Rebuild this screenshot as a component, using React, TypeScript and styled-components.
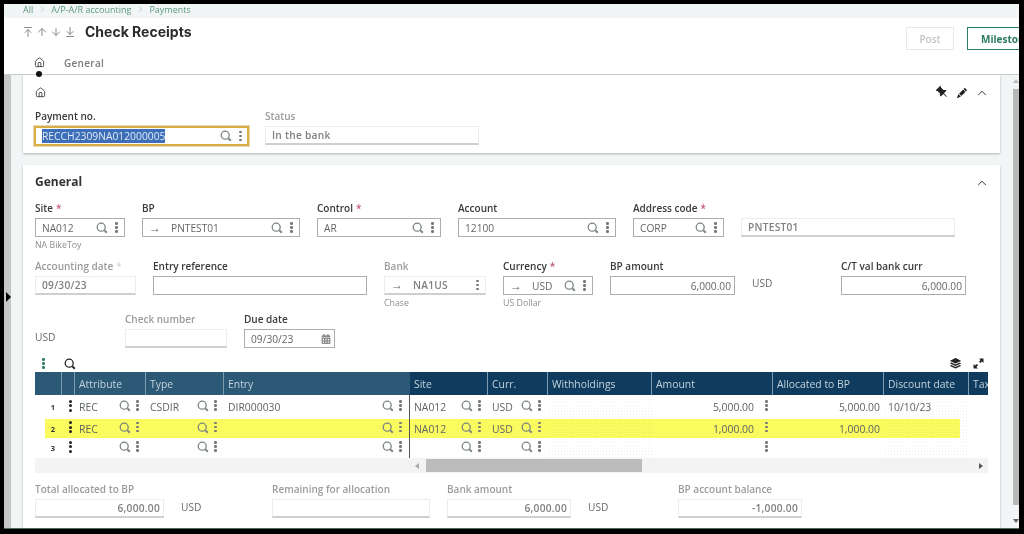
import React from "react";
import styled, { createGlobalStyle } from "styled-components";
import {
  ArrowDown,
  ArrowDownToLine,
  ArrowUp,
  ArrowUpToLine,
  ChevronRight,
  ChevronUp,
  House,
} from "lucide-react";
import { BsPencilFill, BsPinFill, BsStack } from "react-icons/bs";
import { FaCalendarAlt } from "react-icons/fa";

const GlobalStyle = createGlobalStyle`
  html, body {
    margin: 0;
    padding: 0;
    background: #000;
  }
  * {
    box-sizing: border-box;
  }
`;

const Frame = styled.div`
  width: 1024px;
  height: 534px;
  padding: 4px 5px 5px 4px;
  background: #000;
  overflow: hidden;
  font-family: "Open Sans", "Liberation Sans", sans-serif;
`;

const Screen = styled.div`
  display: flex;
  flex-direction: column;
  position: relative;
  height: 100%;
  background: #f2f5f5;
  border-bottom: 1px solid #4f6e5e;
  filter: blur(0.35px);
`;

const Breadcrumb = styled.div`
  display: flex;
  align-items: center;
  flex: none;
  gap: 3px;
  height: 14px;
  padding: 0 0 4px 19px;
  font-size: 9px;
  color: #5c9a85;
  svg {
    width: 9px;
    height: 9px;
    margin: 0 1.5px;
    color: #bbb;
  }
`;

const Header = styled.div`
  flex: none;
  position: relative;
  height: 57px;
  background: #fff;
  border-bottom: 1px solid #c9cccc;
`;

const TitleRow = styled.div`
  display: flex;
  align-items: center;
  height: 27px;
  padding: 0 0 0 18px;
`;

const NavArrows = styled.div`
  display: flex;
  gap: 2px;
  width: 63px;
  color: #8a8a8a;
  svg {
    width: 12px;
    height: 12px;
  }
`;

const Title = styled.h1`
  margin: 0;
  font-family: Inter, "Liberation Sans", sans-serif;
  font-size: 14px;
  font-weight: 700;
  color: #2b2b2b;
  flex: 1;
`;

const ActionButton = styled.div<{ $primary?: boolean }>`
  display: flex;
  align-items: center;
  justify-content: ${(p) => (p.$primary ? "flex-start" : "center")};
  flex: none;
  height: 23px;
  width: ${(p) => (p.$primary ? "52px" : "48px")};
  margin-left: ${(p) => (p.$primary ? "13px" : "0")};
  margin-top: 14px;
  padding-left: ${(p) => (p.$primary ? "13px" : "0")};
  overflow: hidden;
  white-space: nowrap;
  font-size: 10px;
  font-weight: ${(p) => (p.$primary ? 700 : 600)};
  color: ${(p) => (p.$primary ? "#2d7a5f" : "#c4c4c4")};
  background: #fff;
  border: 1px solid ${(p) => (p.$primary ? "#2f7d62" : "#e8e8e8")};
  border-right: ${(p) => (p.$primary ? "none" : undefined)};
`;

const Tabs = styled.div`
  display: flex;
  align-items: center;
  gap: 19px;
  height: 29px;
  padding: 6px 0 0 30px;
  font-size: 10px;
  font-weight: 600;
  letter-spacing: 0.3px;
  color: #7a7a7a;
  svg {
    width: 11px;
    height: 11px;
    color: #444;
  }
`;

const TabDot = styled.span`
  position: absolute;
  left: 32px;
  bottom: -3px;
  width: 6px;
  height: 6px;
  border-radius: 50%;
  background: #111;
`;

const Main = styled.div`
  display: flex;
  flex: 1;
  min-height: 0;
  overflow: hidden;
`;

const SideStrip = styled.div`
  flex: none;
  position: relative;
  width: 7px;
  background-color: #f4f4f4;
  background-image: radial-gradient(#c4c4c4 0.7px, transparent 0.8px);
  background-size: 2px 2px;
`;

const SideHandle = styled.span`
  position: absolute;
  left: 2px;
  top: 217px;
  border-left: 5px solid #000;
  border-top: 5px solid transparent;
  border-bottom: 5px solid transparent;
`;

const Content = styled.div`
  display: flex;
  flex-direction: column;
  flex: none;
  gap: 12px;
  width: 977px;
  margin-left: 12px;
`;

const Card = styled.section<{ $grow?: boolean }>`
  flex: ${(p) => (p.$grow ? "1" : "none")};
  background: #fff;
  box-shadow: 0 1px 2px rgba(0, 0, 0, 0.28);
  padding: 0 12px;
`;

const CardTop = styled.div`
  display: flex;
  align-items: center;
  justify-content: space-between;
  height: 33px;
  padding: 2px 0 0 0;
  svg {
    display: block;
  }
`;

const CardTools = styled.div`
  display: flex;
  align-items: center;
  gap: 8px;
  margin-right: -1px;
  color: #222;
`;

const TiltedPin = styled(BsPinFill)`
  width: 13px;
  height: 13px;
  transform: rotate(-45deg);
`;

const GeneralTitle = styled.div`
  display: flex;
  align-items: center;
  justify-content: space-between;
  height: 36px;
  margin-right: -1px;
  font-size: 12px;
  font-weight: 700;
  color: #333;
  span {
    margin-bottom: 4px;
  }
`;

const Row = styled.div<{ $height: number }>`
  display: flex;
  gap: 17px;
  height: ${(p) => p.$height}px;
`;

const PaymentRow = styled(Row)`
  padding-top: 1px;
`;

const FieldWrap = styled.div<{ $width: number }>`
  flex: none;
  width: ${(p) => p.$width}px;
`;

const Label = styled.div<{ $muted?: boolean }>`
  height: 14px;
  line-height: 14px;
  margin-bottom: 3px;
  font-size: 10px;
  font-weight: 600;
  white-space: nowrap;
  color: ${(p) => (p.$muted ? "#9b9b9b" : "#3a3a3a")};
`;

const Star = styled.span<{ $muted?: boolean }>`
  margin-left: 3px;
  color: ${(p) => (p.$muted ? "#d8d8d8" : "#c2577c")};
`;

const InputBox = styled.div<{ $readonly?: boolean; $right?: boolean }>`
  display: flex;
  align-items: center;
  height: 19px;
  padding: 0 ${(p) => (p.$right ? "3px" : "6px")} 0 6px;
  font-size: 10.2px;
  font-weight: ${(p) => (p.$readonly ? 600 : 400)};
  letter-spacing: ${(p) => (p.$readonly ? "0.25px" : "0")};
  white-space: nowrap;
  color: ${(p) => (p.$readonly ? "#808080" : "#666")};
  background: #fff;
  border: 1px solid ${(p) => (p.$readonly ? "#ececec" : "#a9aeae")};
  border-bottom: ${(p) => (p.$readonly ? "2px solid #cfcfcf" : undefined)};
  justify-content: ${(p) => (p.$right ? "flex-end" : "flex-start")};
`;

const GoldBox = styled(InputBox)`
  height: 20px;
  margin: 0 -1px;
  padding: 0 5px 0 6px;
  border: 2px solid #d9ae45;
  box-shadow: 0 0 0 1px #e7d9ae;
  color: #1e3c68;
`;

const Selected = styled.span`
  background: #3d6fb8;
  color: #dfe8f4;
  font-size: 10.3px;
`;

const BoxText = styled.span`
  flex: 1;
  min-width: 0;
`;

const ArrowMark = styled.span`
  flex: none;
  width: 22px;
  color: #666;
  font-size: 12px;
  font-weight: 400;
  line-height: 1;
`;

const SubText = styled.div`
  height: 12px;
  margin-top: 2px;
  line-height: 12px;
  font-size: 8.8px;
  color: #8f8f8f;
`;

const UnitText = styled.div<{ $width: number; $top: number }>`
  flex: none;
  width: ${(p) => p.$width}px;
  padding-top: ${(p) => p.$top}px;
  font-size: 10.2px;
  color: #6a6a6a;
`;

const SearchSvg = styled.svg<{ $dark?: boolean }>`
  flex: none;
  width: 12px;
  height: 12px;
  fill: none;
  stroke: ${(p) => (p.$dark ? "#222" : "#7c8484")};
`;

const SearchIcon = ({ dark }: { dark?: boolean }) => (
  <SearchSvg $dark={dark} viewBox="0 0 12 12">
    <circle cx="5.2" cy="5.2" r="4" strokeWidth="1.3" />
    <path d="M8.4 8.4 L10.8 10.8" strokeWidth="2" />
  </SearchSvg>
);

const DotsWrap = styled.span<{ $strong?: boolean; $gap?: number }>`
  display: flex;
  flex-direction: column;
  flex: none;
  gap: 1.5px;
  width: 3px;
  margin-left: ${(p) => p.$gap ?? 7}px;
  i {
    display: block;
    width: ${(p) => (p.$strong ? "3px" : "2.5px")};
    height: ${(p) => (p.$strong ? "3px" : "2.5px")};
    border-radius: 50%;
    background: ${(p) => (p.$strong ? "#222" : "#777")};
  }
`;

const Dots = ({ strong, gap }: { strong?: boolean; gap?: number }) => (
  <DotsWrap $strong={strong} $gap={gap}>
    <i />
    <i />
    <i />
  </DotsWrap>
);

const TableBar = styled.div`
  display: flex;
  align-items: center;
  height: 17px;
  padding: 0 0 0 7px;
`;

const TealDots = styled(DotsWrap)`
  margin: 0 19px 0 0;
  i {
    background: #2e7c66;
  }
`;

const TableBarRight = styled.div`
  display: flex;
  align-items: center;
  gap: 12px;
  margin-left: auto;
  padding-right: 4px;
  color: #222;
  font-size: 11px;
`;

const ExpandIcon = () => (
  <svg width="11" height="11" viewBox="0 0 11 11" fill="#222">
    <path d="M6 0.5 H10.5 V5 L9 3.5 L7.2 5 L6 3.8 L7.6 2 Z" />
    <path d="M5 10.5 H0.5 V6 L2 7.5 L3.8 6 L5 7.2 L3.4 9 Z" />
  </svg>
);

const TEMPLATE = "27px 13px 71px 78px 186px 78px 60px 104px 121px 111px 85px 19px";

const HeaderRow = styled.div`
  display: grid;
  grid-template-columns: ${TEMPLATE};
  height: 23px;
  width: 953px;
  background: #0f3c5e;
`;

const HeadCell = styled.div<{ $frozen?: boolean; $last?: boolean }>`
  display: flex;
  align-items: center;
  padding-left: 4px;
  overflow: hidden;
  white-space: nowrap;
  font-size: 10.4px;
  color: #c3d2dc;
  background: ${(p) => (p.$frozen ? "#2c5975" : "#0f3c5e")};
  border-right: ${(p) => (p.$last ? "none" : "1px solid #7f9cae")};
`;

const BodyRow = styled.div<{ $highlight?: boolean; $height: number }>`
  display: grid;
  grid-template-columns: ${TEMPLATE};
  height: ${(p) => p.$height}px;
  width: 953px;
  background: ${(p) =>
    p.$highlight
      ? "linear-gradient(to right, transparent 10px, #fafb5e 10px, #fafb5e 925px, transparent 925px)"
      : "transparent"};
`;

const RowNumber = styled.div`
  display: flex;
  align-items: center;
  justify-content: flex-end;
  padding-right: 7px;
  font-size: 7.5px;
  font-weight: 700;
  color: #333;
`;

const RowMenu = styled.div`
  display: flex;
  align-items: center;
  padding-bottom: 3px;
`;

const Cell = styled.div<{ $divider?: boolean; $hatched?: boolean; $pad?: number }>`
  display: flex;
  align-items: center;
  padding: 0 ${(p) => p.$pad ?? 7}px 0 4px;
  min-width: 0;
  font-size: 10.4px;
  white-space: nowrap;
  color: #5e6464;
  border-right: ${(p) => (p.$divider ? "1px solid #555" : "none")};
  background-image: ${(p) =>
    p.$hatched
      ? "radial-gradient(rgba(0, 0, 0, 0.05) 0.6px, transparent 0.7px)"
      : "none"};
  background-size: 3px 3px;
  > svg {
    margin-bottom: 2px;
  }
  > ${DotsWrap} {
    margin-bottom: 3px;
  }
`;

const CellText = styled.span<{ $right?: boolean }>`
  flex: 1;
  text-align: ${(p) => (p.$right ? "right" : "left")};
`;

const Hscroll = styled.div`
  display: flex;
  align-items: center;
  width: 953px;
  height: 15px;
  padding: 0 5px 0 380px;
  background: #f3f3f3;
`;

const ScrollThumb = styled.div`
  width: 216px;
  height: 13px;
  margin-left: 7px;
  background: #bcbcbc;
`;

const ScrollArrow = styled.span<{ $right?: boolean }>`
  flex: none;
  margin-left: ${(p) => (p.$right ? "auto" : "0")};
  border-top: 3px solid transparent;
  border-bottom: 3px solid transparent;
  border-left: ${(p) => (p.$right ? "4px solid #555" : "none")};
  border-right: ${(p) => (p.$right ? "none" : "4px solid #aaa")};
`;

const FooterRow = styled(Row)`
  margin-top: 9px;
`;

const VScroll = styled.div`
  display: flex;
  flex-direction: column;
  align-items: center;
  flex: none;
  width: 6px;
  margin-left: 13px;
  padding-top: 4px;
`;

const VThumb = styled.div`
  flex: none;
  width: 6px;
  height: 416px;
  margin: 6px 0 14px;
  background: #b8b8b8;
`;

const VArrow = styled.span<{ $down?: boolean }>`
  flex: none;
  border-left: 3px solid transparent;
  border-right: 3px solid transparent;
  border-top: ${(p) => (p.$down ? "4px solid #666" : "none")};
  border-bottom: ${(p) => (p.$down ? "none" : "4px solid #bbb")};
`;

const CalendarSlot = styled.span`
  display: flex;
  margin-right: -3px;
`;

interface FieldProps {
  label: string;
  width: number;
  value?: string;
  muted?: boolean;
  star?: boolean;
  readonly?: boolean;
  arrow?: boolean;
  search?: boolean;
  dots?: boolean;
  right?: boolean;
  sub?: string;
  calendar?: boolean;
}

const Field = ({
  label,
  width,
  value,
  muted,
  star,
  readonly,
  arrow,
  search,
  dots,
  right,
  sub,
  calendar,
}: FieldProps) => (
  <FieldWrap $width={width}>
    <Label $muted={muted}>
      {label}
      {star && <Star $muted={muted}>*</Star>}
    </Label>
    <InputBox $readonly={readonly} $right={right}>
      {arrow && <ArrowMark>→</ArrowMark>}
      {right ? value : <BoxText>{value}</BoxText>}
      {search && <SearchIcon />}
      {dots && <Dots />}
      {calendar && (
        <CalendarSlot>
          <FaCalendarAlt size={10} color="#8a8a8a" />
        </CalendarSlot>
      )}
    </InputBox>
    {sub && <SubText>{sub}</SubText>}
  </FieldWrap>
);

interface TableRow {
  no: number;
  height: number;
  highlight?: boolean;
  attribute?: string;
  type?: string;
  entry?: string;
  site?: string;
  curr?: string;
  amount?: string;
  allocated?: string;
  discount?: string;
}

const rows: TableRow[] = [
  {
    no: 1,
    height: 24,
    attribute: "REC",
    type: "CSDIR",
    entry: "DIR000030",
    site: "NA012",
    curr: "USD",
    amount: "5,000.00",
    allocated: "5,000.00",
    discount: "10/10/23",
  },
  {
    no: 2,
    height: 19,
    highlight: true,
    attribute: "REC",
    site: "NA012",
    curr: "USD",
    amount: "1,000.00",
    allocated: "1,000.00",
  },
  { no: 3, height: 20 },
];

const LookupCell = ({ text, divider }: { text?: string; divider?: boolean }) => (
  <Cell $divider={divider}>
    <CellText>{text}</CellText>
    <SearchIcon />
    <Dots gap={5} />
  </Cell>
);

const columns = [
  "",
  "",
  "Attribute",
  "Type",
  "Entry",
  "Site",
  "Curr.",
  "Withholdings",
  "Amount",
  "Allocated to BP",
  "Discount date",
  "Tax",
];

export default function App() {
  return (
    <Frame>
      <GlobalStyle />
      <Screen>
        <Breadcrumb>
          <span>All</span>
          <ChevronRight />
          <span>A/P-A/R accounting</span>
          <ChevronRight />
          <span>Payments</span>
        </Breadcrumb>

        <Header>
          <TitleRow>
            <NavArrows>
              <ArrowUpToLine />
              <ArrowUp />
              <ArrowDown />
              <ArrowDownToLine />
            </NavArrows>
            <Title>Check Receipts</Title>
            <ActionButton>Post</ActionButton>
            <ActionButton $primary>Milestone</ActionButton>
          </TitleRow>
          <Tabs>
            <House />
            <span>General</span>
          </Tabs>
          <TabDot />
        </Header>

        <Main>
          <SideStrip>
            <SideHandle />
          </SideStrip>
          <Content>
            <Card>
              <CardTop>
                <House size={11} color="#444" />
                <CardTools>
                  <TiltedPin />
                  <BsPencilFill size={10} />
                  <ChevronUp size={14} strokeWidth={1.6} />
                </CardTools>
              </CardTop>
              <PaymentRow $height={45}>
                <FieldWrap $width={213}>
                  <Label>Payment no.</Label>
                  <GoldBox>
                    <BoxText>
                      <Selected>RECCH2309NA012000005</Selected>
                    </BoxText>
                    <SearchIcon />
                    <Dots />
                  </GoldBox>
                </FieldWrap>
                <Field label="Status" width={214} value="In the bank" muted readonly />
              </PaymentRow>
            </Card>

            <Card $grow>
              <GeneralTitle>
                <span>General</span>
                <ChevronUp size={14} strokeWidth={1.6} color="#222" />
              </GeneralTitle>
              <Row $height={58}>
                <Field label="Site" star width={90} value="NA012" search dots sub="NA BikeToy" />
                <Field label="BP" width={158} value="PNTEST01" arrow search dots />
                <Field label="Control" star width={124} value="AR" search dots />
                <Field label="Account" width={158} value="12100" search dots />
                <Field label="Address code" star width={91} value="CORP" search dots />
                <FieldWrap $width={214}>
                  <Label />
                  <InputBox $readonly>PNTEST01</InputBox>
                </FieldWrap>
              </Row>
              <Row $height={53}>
                <Field label="Accounting date" star muted readonly width={101} value="09/30/23" />
                <Field label="Entry reference" width={214} />
                <Field label="Bank" muted readonly arrow dots width={102} value="NA1US" sub="Chase" />
                <Field label="Currency" star width={90} value="USD" arrow search dots sub="US Dollar" />
                <Field label="BP amount" width={125} value="6,000.00" right />
                <UnitText $width={72} $top={17}>USD</UnitText>
                <Field label="C/T val bank curr" width={125} value="6,000.00" right />
              </Row>
              <Row $height={43}>
                <UnitText $width={73} $top={18}>USD</UnitText>
                <Field label="Check number" muted readonly width={102} />
                <Field label="Due date" width={91} value="09/30/23" calendar />
              </Row>

              <TableBar>
                <TealDots as="span">
                  <i />
                  <i />
                  <i />
                </TealDots>
                <SearchIcon dark />
                <TableBarRight>
                  <BsStack />
                  <ExpandIcon />
                </TableBarRight>
              </TableBar>
              <HeaderRow>
                {columns.map((name, i) => (
                  <HeadCell key={i} $frozen={i < 5} $last={i === 4 || i === 11}>
                    {name}
                  </HeadCell>
                ))}
              </HeaderRow>
              {rows.map((row) => (
                <BodyRow key={row.no} $highlight={row.highlight} $height={row.height}>
                  <RowNumber>{row.no}</RowNumber>
                  <RowMenu>
                    <Dots strong />
                  </RowMenu>
                  <LookupCell text={row.attribute} />
                  <LookupCell text={row.type} />
                  <LookupCell text={row.entry} divider />
                  <LookupCell text={row.site} />
                  <LookupCell text={row.curr} />
                  <Cell $hatched />
                  <Cell $pad={5}>
                    <CellText $right>{row.amount}</CellText>
                    <Dots gap={11} />
                  </Cell>
                  <Cell $pad={4}>
                    <CellText $right>{row.allocated}</CellText>
                  </Cell>
                  <Cell $hatched>{row.discount}</Cell>
                  <Cell />
                </BodyRow>
              ))}
              <Hscroll>
                <ScrollArrow />
                <ScrollThumb />
                <ScrollArrow $right />
              </Hscroll>

              <FooterRow $height={40}>
                <Field label="Total allocated to BP" muted readonly width={129} value="6,000.00" right />
                <UnitText $width={74} $top={18}>USD</UnitText>
                <Field label="Remaining for allocation" muted readonly width={158} />
                <Field label="Bank amount" muted readonly width={124} value="6,000.00" right />
                <UnitText $width={73} $top={18}>USD</UnitText>
                <Field label="BP account balance" muted readonly width={124} value="-1,000.00" right />
              </FooterRow>
            </Card>
          </Content>
          <VScroll>
            <VArrow />
            <VThumb />
            <VArrow $down />
          </VScroll>
        </Main>
      </Screen>
    </Frame>
  );
}
